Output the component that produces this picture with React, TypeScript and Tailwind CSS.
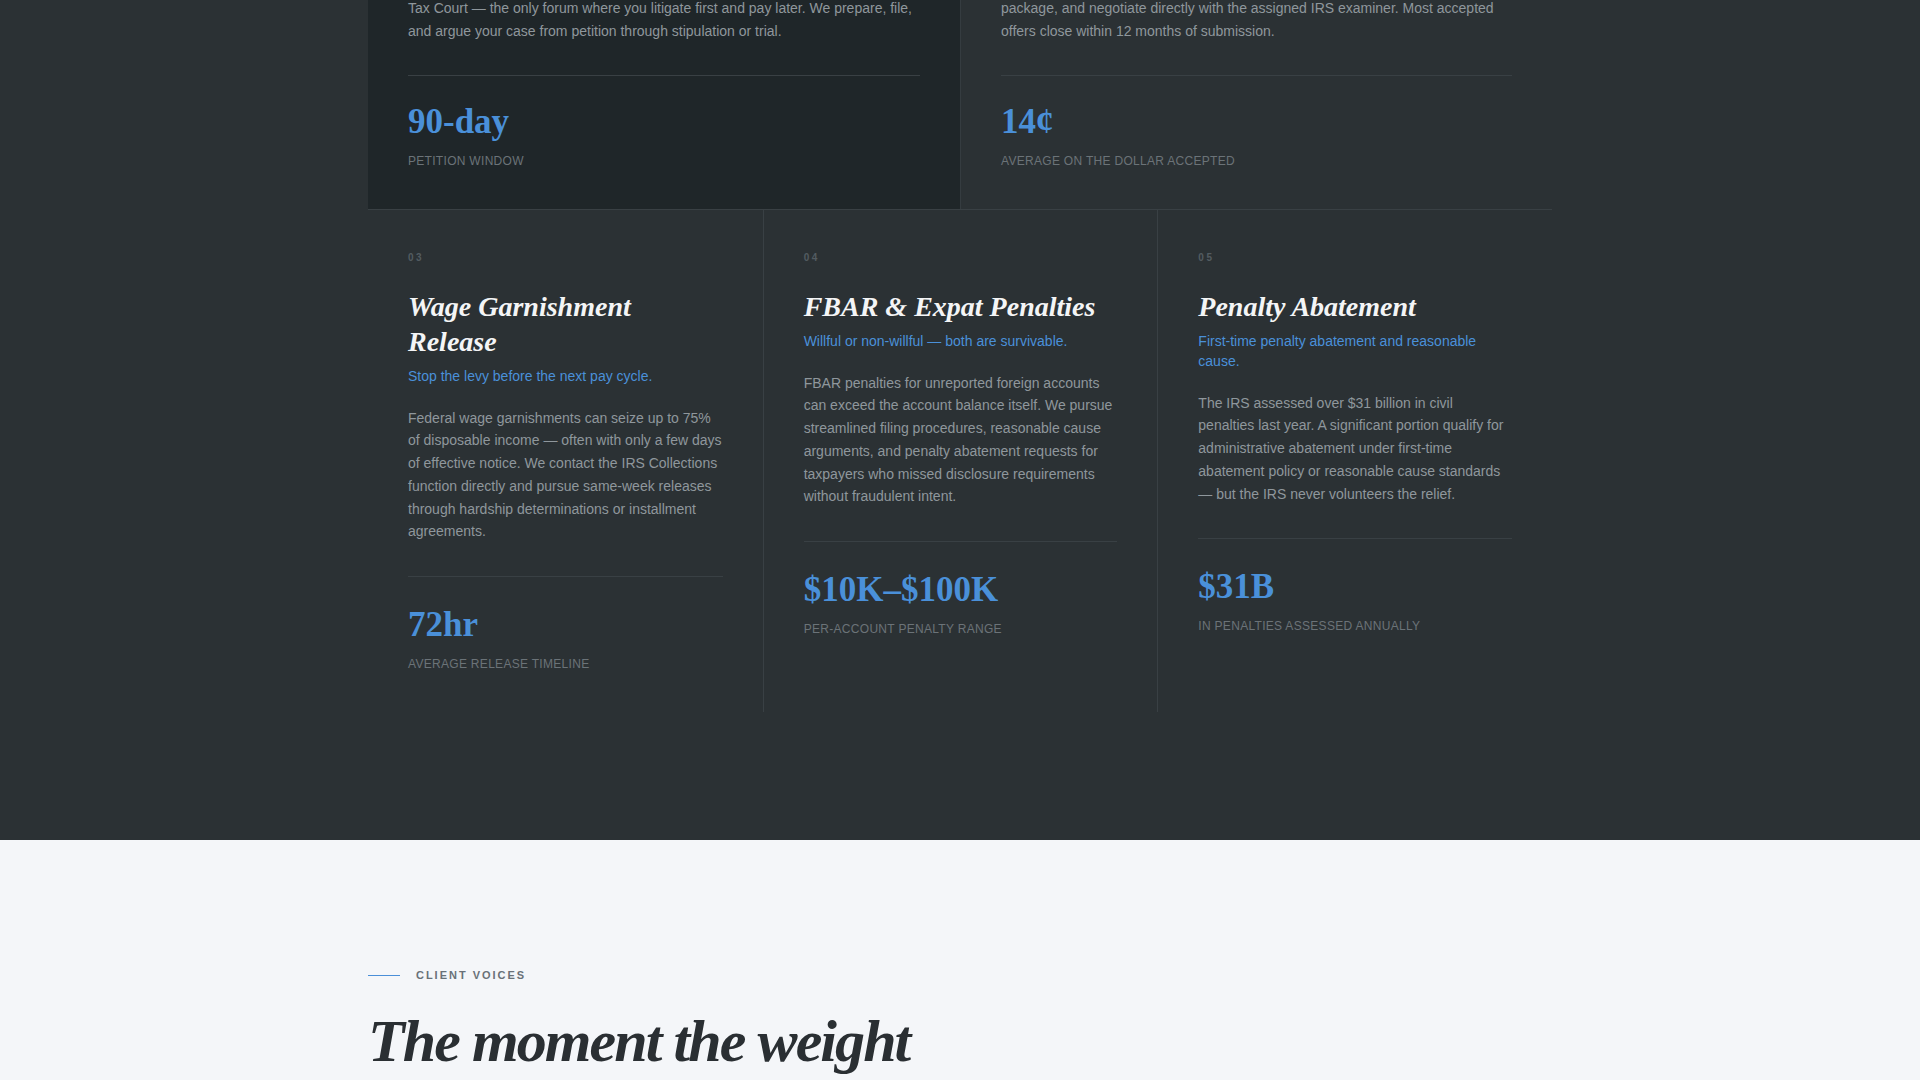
const sans = { fontFamily: '"Liberation Sans", Arial, sans-serif' };
const serif = { fontFamily: '"Liberation Serif", "Times New Roman", serif' };

type Service = {
  num: string;
  title: string;
  tagline: string;
  body: string;
  stat: string;
  statLabel: string;
};

const services: Service[] = [
  {
    num: "03",
    title: "Wage Garnishment Release",
    tagline: "Stop the levy before the next pay cycle.",
    body: "Federal wage garnishments can seize up to 75% of disposable income — often with only a few days of effective notice. We contact the IRS Collections function directly and pursue same-week releases through hardship determinations or installment agreements.",
    stat: "72hr",
    statLabel: "Average release timeline",
  },
  {
    num: "04",
    title: "FBAR & Expat Penalties",
    tagline: "Willful or non-willful — both are survivable.",
    body: "FBAR penalties for unreported foreign accounts can exceed the account balance itself. We pursue streamlined filing procedures, reasonable cause arguments, and penalty abatement requests for taxpayers who missed disclosure requirements without fraudulent intent.",
    stat: "$10K–$100K",
    statLabel: "Per-account penalty range",
  },
  {
    num: "05",
    title: "Penalty Abatement",
    tagline: "First-time penalty abatement and reasonable cause.",
    body: "The IRS assessed over $31 billion in civil penalties last year. A significant portion qualify for administrative abatement under first-time abatement policy or reasonable cause standards — but the IRS never volunteers the relief.",
    stat: "$31B",
    statLabel: "In penalties assessed annually",
  },
];

function Stat({ value, label, wide = false }: { value: string; label: string; wide?: boolean }) {
  return (
    <div
      className={`border-t border-[#394044] ${wide ? "mt-[32px] pt-[28px]" : "mt-[33px] pt-[30px]"}`}
    >
      <div
        className="text-[35px] font-bold leading-none text-[#4a90d9]"
        style={serif}
      >
        {value}
      </div>
      <div className="mt-[14px] text-[12px] uppercase leading-4 tracking-wide text-[#6b7378]">
        {label}
      </div>
    </div>
  );
}

function ServiceCell({ s, first }: { s: Service; first: boolean }) {
  return (
    <div className={`px-10 pt-10 pb-10 ${first ? "" : "border-l border-[#394044]"}`}>
      <div className="text-[10px] font-semibold leading-[15px] tracking-[0.25em] text-[#535c61]">
        {s.num}
      </div>
      <h3
        className="mt-[24px] text-[28px] font-bold italic leading-[1.25] text-[#f4f5f6]"
        style={serif}
      >
        {s.title}
      </h3>
      <p className="mt-[7px] text-[14px] leading-5 text-[#4a90d9]">{s.tagline}</p>
      <p className="mt-[21px] text-[14px] leading-relaxed text-[#8f979c]">{s.body}</p>
      <Stat value={s.stat} label={s.statLabel} />
    </div>
  );
}

export default function App() {
  return (
    <div className="min-h-screen overflow-hidden bg-[#f4f6f9]" style={sans}>
      <section className="bg-[#2b3134] pb-32">
        <div className="mx-auto max-w-[1280px] px-12">
          <div className="grid grid-cols-2 border-b border-[#394044]">
            <div className="bg-[#1f2629] px-10 pb-10">
              <p className="-mt-[3px] text-[14px] leading-relaxed text-[#8f979c]">
                Tax Court — the only forum where you litigate first and pay later. We prepare, file, and argue your case from petition through stipulation or trial.
              </p>
              <Stat value="90-day" label="Petition window" wide />
            </div>
            <div className="border-l border-[#353c40] px-10 pb-10">
              <p className="-mt-[3px] text-[14px] leading-relaxed text-[#8f979c]">
                package, and negotiate directly with the assigned IRS examiner. Most accepted offers close within 12 months of submission.
              </p>
              <Stat value="14¢" label="Average on the dollar accepted" wide />
            </div>
          </div>
          <div className="grid grid-cols-3">
            {services.map((s, i) => (
              <ServiceCell key={s.num} s={s} first={i === 0} />
            ))}
          </div>
        </div>
      </section>

      <section className="pt-[127px]">
        <div className="mx-auto max-w-[1280px] px-12">
          <div className="flex items-center gap-4">
            <span className="h-px w-8 bg-[#4a8fd8]" />
            <span className="text-[11px] font-bold uppercase leading-4 tracking-[0.18em] text-[#697178]">
              Client Voices
            </span>
          </div>
          <h2
            className="mt-[25px] text-[60px] font-bold italic leading-[1.1] tracking-[-0.032em] text-[#2a2f33]"
            style={serif}
          >
            The moment the weight
          </h2>
        </div>
      </section>
    </div>
  );
}
